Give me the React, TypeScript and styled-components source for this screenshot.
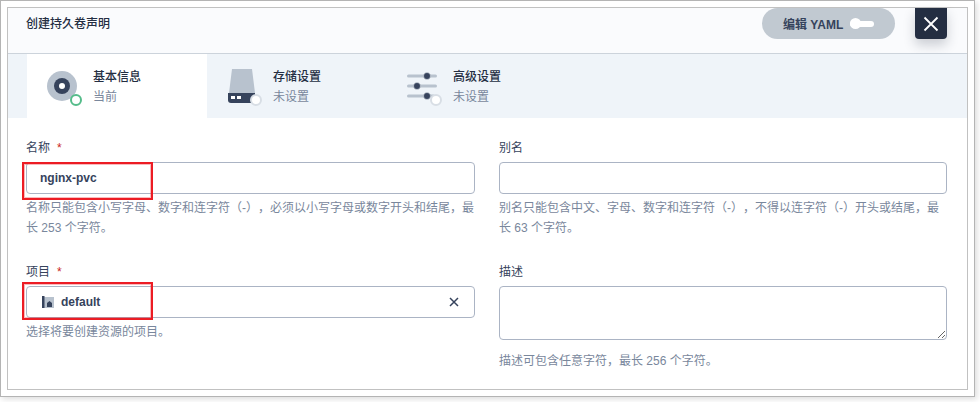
import styled, { createGlobalStyle } from 'styled-components'

const GlobalStyle = createGlobalStyle`
  html, body {
    margin: 0;
    padding: 0;
    background: #fff;
  }
  body {
    width: 980px;
    height: 402px;
    overflow: hidden;
    font-family: "Liberation Sans", "Noto Sans CJK SC", sans-serif;
    font-size: 12px;
    color: #242e42;
    text-spacing-trim: space-all;
  }
`

const Frame = styled.div`
  box-sizing: border-box;
  width: 975px;
  height: 397px;
  padding: 6px;
  background: #fff;
  border: 1px solid #b4b4b4;
  box-shadow: 2px 2px 6px rgba(0, 0, 0, 0.14);
`

const Panel = styled.div`
  box-sizing: border-box;
  width: 961px;
  height: 383px;
  border: 1px solid #c1c1c1;
  display: flex;
  flex-direction: column;
`

const Header = styled.div`
  height: 45px;
  flex: none;
  display: flex;
  align-items: flex-start;
  background: #fafbfd;
  border-bottom: 1px solid #ccd3db;
  padding: 0 20px 0 18px;
`

const Title = styled.div`
  flex: 1;
  line-height: 20px;
  margin-top: 6px;
  font-weight: 500;
  color: #242e42;
`

const YamlButton = styled.div`
  width: 133px;
  height: 31px;
  border-radius: 16px;
  background: #c1c9d1;
  display: flex;
  align-items: center;
  padding-left: 21px;
  box-sizing: border-box;
  font-weight: 700;
  color: #36435c;
  margin-right: 20px;
`

const Toggle = styled.span`
  position: relative;
  width: 24px;
  height: 6px;
  margin-left: 7px;
  border-radius: 3px;
  background: #fff;
  &::before {
    content: '';
    position: absolute;
    left: 0;
    top: -2.5px;
    width: 11px;
    height: 11px;
    border-radius: 50%;
    background: #fff;
  }
`

const CloseButton = styled.div`
  width: 32px;
  height: 31px;
  background: #242e42;
  border-radius: 0 0 4px 4px;
  box-shadow: 0 6px 12px rgba(36, 46, 66, 0.22);
  display: flex;
  align-items: center;
  justify-content: center;
`

const Tabs = styled.div`
  height: 64px;
  flex: none;
  display: flex;
  background: #eff4f9;
  padding-left: 19px;
`

const Tab = styled.div<{ $active?: boolean }>`
  box-sizing: border-box;
  width: 180px;
  padding: 12px 20px;
  display: flex;
  align-items: center;
  background: ${(p) => (p.$active ? '#fff' : 'transparent')};
`

const TabIcon = styled.svg`
  width: 40px;
  height: 40px;
  flex: none;
  margin-right: 6px;
`

const TabText = styled.div`
  line-height: 20px;
  padding-top: 1px;
`

const TabName = styled.div`
  font-weight: 500;
  color: #242e42;
`

const TabState = styled.div`
  color: #79879c;
`

const Form = styled.div`
  display: grid;
  grid-template-columns: 449px 448px;
  column-gap: 24px;
  padding: 20px 19px 0 18px;
  align-items: start;
`

const Field = styled.div`
  height: 124px;
`

const Label = styled.div`
  line-height: 20px;
  height: 20px;
  margin-bottom: 4px;
  color: #36435c;
`

const Star = styled.span`
  color: #ca2621;
  margin-left: 7px;
`

const Control = styled.div`
  position: relative;
`

const TextInput = styled.input`
  display: block;
  box-sizing: border-box;
  width: 100%;
  height: 32px;
  padding: 0 13px;
  border: 1px solid #abb4c4;
  border-radius: 4px;
  background: #fff;
  outline: none;
  font-family: inherit;
  font-size: 12px;
  font-weight: 700;
  color: #36435c;
`

const Select = styled.div`
  box-sizing: border-box;
  height: 32px;
  display: flex;
  align-items: center;
  padding: 0 15px 0 15px;
  border: 1px solid #abb4c4;
  border-radius: 4px;
  background: #fff;
  font-weight: 700;
  color: #36435c;
`

const SelectValue = styled.span`
  flex: 1;
  margin-left: 7px;
`

const DescArea = styled.textarea`
  display: block;
  box-sizing: border-box;
  width: 100%;
  height: 54px;
  padding: 6px 11px;
  border: 1px solid #abb4c4;
  border-radius: 4px;
  outline: none;
  background: #fff;
`

const Help = styled.div<{ $gap?: number }>`
  margin-top: ${(p) => p.$gap ?? 4}px;
  line-height: 20px;
  color: #79879c;
`

const Mark = styled.div<{ $top: number }>`
  position: absolute;
  left: -4px;
  top: ${(p) => p.$top}px;
  box-sizing: border-box;
  width: 131px;
  height: 38px;
  border: 2px solid #ec1c24;
  box-shadow: inset 0 0 0 1px rgba(236, 28, 36, 0.3);
  pointer-events: none;
`

const Ring = ({ color }: { color: string }) => (
  <circle cx="29" cy="34" r="5" fill="#fff" stroke={color} strokeWidth="2" />
)

const App = () => {
  return (
    <>
      <GlobalStyle />
      <Frame>
        <Panel>
          <Header>
            <Title>创建持久卷声明</Title>
            <YamlButton>
              编辑 YAML
              <Toggle />
            </YamlButton>
            <CloseButton>
              <svg width="16" height="16" viewBox="0 0 16 16">
                <path d="M1.5 1.5l13 13M14.5 1.5l-13 13" stroke="#fff" strokeWidth="1.8" />
              </svg>
            </CloseButton>
          </Header>

          <Tabs>
            <Tab $active>
              <TabIcon viewBox="0 0 40 40">
                <circle cx="15" cy="20" r="15" fill="#b8c2ce" />
                <circle cx="15" cy="20" r="8" fill="#36435c" />
                <circle cx="15" cy="20" r="3" fill="#fff" />
                <Ring color="#55bc8a" />
              </TabIcon>
              <TabText>
                <TabName>基本信息</TabName>
                <TabState>当前</TabState>
              </TabText>
            </Tab>
            <Tab>
              <TabIcon viewBox="0 0 40 40">
                <path d="M5 3h20l3 24H2z" fill="#b8c2ce" />
                <path d="M1 27h27v7a3 3 0 0 1-3 3H4a3 3 0 0 1-3-3z" fill="#36435c" />
                <path d="M4 30h4v3H4zM10 30h4v3h-4z" fill="#fff" />
                <Ring color="#d8dee5" />
              </TabIcon>
              <TabText>
                <TabName>存储设置</TabName>
                <TabState>未设置</TabState>
              </TabText>
            </Tab>
            <Tab>
              <TabIcon viewBox="0 0 40 40">
                <path d="M1.5 10h27M1.5 20h27M1.5 30h25" stroke="#b8c2ce" strokeWidth="3" strokeLinecap="round" />
                <circle cx="20" cy="10" r="3.5" fill="#36435c" stroke="#eff4f9" strokeWidth="0.5" />
                <circle cx="10" cy="20" r="3.5" fill="#36435c" stroke="#eff4f9" strokeWidth="0.5" />
                <circle cx="20" cy="30" r="3.5" fill="#36435c" stroke="#eff4f9" strokeWidth="0.5" />
                <Ring color="#d8dee5" />
              </TabIcon>
              <TabText>
                <TabName>高级设置</TabName>
                <TabState>未设置</TabState>
              </TabText>
            </Tab>
          </Tabs>

          <Form>
            <Field>
              <Label>
                名称<Star>*</Star>
              </Label>
              <Control>
                <TextInput value="nginx-pvc" readOnly />
                <Mark $top={0} />
              </Control>
              <Help>
                名称只能包含小写字母、数字和连字符（-），必须以小写字母或数字开头和结尾，最长 253 个字符。
              </Help>
            </Field>
            <Field>
              <Label>别名</Label>
              <TextInput readOnly />
              <Help>
                别名只能包含中文、字母、数字和连字符（-），不得以连字符（-）开头或结尾，最长 63 个字符。
              </Help>
            </Field>
            <Field>
              <Label>
                项目<Star>*</Star>
              </Label>
              <Control>
                <Select>
                  <svg width="12" height="12" viewBox="0 0 12 12">
                    <path d="M2 1h10v11H2z" fill="#b8c2ce" />
                    <path d="M0 0h2.5v12H0z" fill="#36435c" />
                    <path d="M5 11V7l2.5-2L10 7v4z" fill="#36435c" />
                  </svg>
                  <SelectValue>default</SelectValue>
                  <svg width="10" height="10" viewBox="0 0 10 10">
                    <path d="M1 1l8 8M9 1L1 9" stroke="#36435c" strokeWidth="1.5" />
                  </svg>
                </Select>
                <Mark $top={-4} />
              </Control>
              <Help>选择将要创建资源的项目。</Help>
            </Field>
            <Field>
              <Label>描述</Label>
              <DescArea />
              <Help $gap={11}>描述可包含任意字符，最长 256 个字符。</Help>
            </Field>
          </Form>
        </Panel>
      </Frame>
    </>
  )
}

export default App
